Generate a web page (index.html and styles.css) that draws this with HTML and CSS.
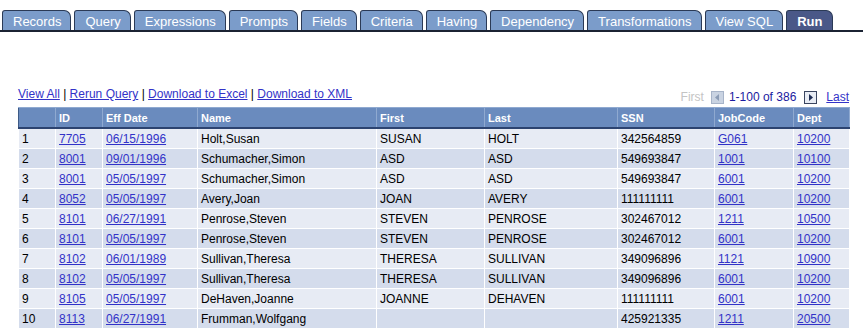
FILE: index.html
```html
<!DOCTYPE html>
<html lang="en">
  <head>
    <meta charset="UTF-8" />
    <title>Query Run</title>
    <link rel="stylesheet" href="styles.css">
  </head>
  <body>
    <div class="tabs">
      <a class="tab">Records</a>
      <a class="tab">Query</a>
      <a class="tab">Expressions</a>
      <a class="tab">Prompts</a>
      <a class="tab">Fields</a>
      <a class="tab">Criteria</a>
      <a class="tab">Having</a>
      <a class="tab">Dependency</a>
      <a class="tab">Transformations</a>
      <a class="tab">View SQL</a>
      <a class="tab tab-active">Run</a>
    </div>

    <div class="results">
      <div class="results_bar">
        <div class="results_links">
          <a href="#">View All</a> | <a href="#">Rerun Query</a> |
          <a href="#">Download to Excel</a> | <a href="#">Download to XML</a>
        </div>
        <div class="results_nav">
          <span class="nav_first">First</span>
          <span class="nav_btn nav_btn-off">
            <svg width="9" height="9" viewBox="0 0 9 9"><path d="M6 1 L2 4.5 L6 8 Z" fill="#8b9cb6"/></svg>
          </span>
          <span class="nav_count">1-100 of 386</span>
          <span class="nav_btn">
            <svg width="9" height="9" viewBox="0 0 9 9"><path d="M3 1 L7 4.5 L3 8 Z" fill="#1e2d55"/></svg>
          </span>
          <a href="#" class="nav_last">Last</a>
        </div>
      </div>

      <table class="grid">
        <colgroup>
          <col style="width: 37px" />
          <col style="width: 47px" />
          <col style="width: 95px" />
          <col style="width: 179px" />
          <col style="width: 108px" />
          <col style="width: 133px" />
          <col style="width: 97px" />
          <col style="width: 79px" />
          <col style="width: 56px" />
        </colgroup>
        <thead>
          <tr>
            <th></th>
            <th>ID</th>
            <th>Eff Date</th>
            <th>Name</th>
            <th>First</th>
            <th>Last</th>
            <th>SSN</th>
            <th>JobCode</th>
            <th>Dept</th>
          </tr>
        </thead>
        <tbody>
          <tr><td>1</td><td><a href="#">7705</a></td><td><a href="#">06/15/1996</a></td><td>Holt,Susan</td><td>SUSAN</td><td>HOLT</td><td>342564859</td><td><a href="#">G061</a></td><td><a href="#">10200</a></td></tr>
          <tr><td>2</td><td><a href="#">8001</a></td><td><a href="#">09/01/1996</a></td><td>Schumacher,Simon</td><td>ASD</td><td>ASD</td><td>549693847</td><td><a href="#">1001</a></td><td><a href="#">10100</a></td></tr>
          <tr><td>3</td><td><a href="#">8001</a></td><td><a href="#">05/05/1997</a></td><td>Schumacher,Simon</td><td>ASD</td><td>ASD</td><td>549693847</td><td><a href="#">6001</a></td><td><a href="#">10200</a></td></tr>
          <tr><td>4</td><td><a href="#">8052</a></td><td><a href="#">05/05/1997</a></td><td>Avery,Joan</td><td>JOAN</td><td>AVERY</td><td>111111111</td><td><a href="#">6001</a></td><td><a href="#">10200</a></td></tr>
          <tr><td>5</td><td><a href="#">8101</a></td><td><a href="#">06/27/1991</a></td><td>Penrose,Steven</td><td>STEVEN</td><td>PENROSE</td><td>302467012</td><td><a href="#">1211</a></td><td><a href="#">10500</a></td></tr>
          <tr><td>6</td><td><a href="#">8101</a></td><td><a href="#">05/05/1997</a></td><td>Penrose,Steven</td><td>STEVEN</td><td>PENROSE</td><td>302467012</td><td><a href="#">6001</a></td><td><a href="#">10200</a></td></tr>
          <tr><td>7</td><td><a href="#">8102</a></td><td><a href="#">06/01/1989</a></td><td>Sullivan,Theresa</td><td>THERESA</td><td>SULLIVAN</td><td>349096896</td><td><a href="#">1121</a></td><td><a href="#">10900</a></td></tr>
          <tr><td>8</td><td><a href="#">8102</a></td><td><a href="#">05/05/1997</a></td><td>Sullivan,Theresa</td><td>THERESA</td><td>SULLIVAN</td><td>349096896</td><td><a href="#">6001</a></td><td><a href="#">10200</a></td></tr>
          <tr><td>9</td><td><a href="#">8105</a></td><td><a href="#">05/05/1997</a></td><td>DeHaven,Joanne</td><td>JOANNE</td><td>DEHAVEN</td><td>111111111</td><td><a href="#">6001</a></td><td><a href="#">10200</a></td></tr>
          <tr><td>10</td><td><a href="#">8113</a></td><td><a href="#">06/27/1991</a></td><td>Frumman,Wolfgang</td><td></td><td></td><td>425921335</td><td><a href="#">1211</a></td><td><a href="#">20500</a></td></tr>
        </tbody>
      </table>
    </div>
  </body>
</html>
```

FILE: styles.css
```css
body {
  margin: 0;
  color: #000;
  font-family: "Liberation Sans", Arial, sans-serif;
  font-size: 12px;
  background-color: #fff;
}

a {
  color: #3232c8;
  text-decoration: underline;
}

/* tab strip */
.tabs {
  display: flex;
  gap: 3px;
  margin-top: 10px;
  padding-left: 2px;
  border-bottom: 2px solid #1b2333;
  height: 20px;
}

.tab {
  display: flex;
  align-items: center;
  height: 20px;
  box-sizing: border-box;
  padding: 1px 9px 0 10px;
  background-color: #7b9cca;
  border: 1px solid #2b3a56;
  border-bottom: none;
  border-radius: 3px 7px 0 0;
  color: #fff;
  font-size: 13px;
  text-decoration: none;
  white-space: nowrap;
}

.tab-active {
  background-color: #4a5888;
  font-weight: bold;
  padding: 1px 10px 0 10px;
}

/* results */
.results {
  margin-left: 18px;
  width: 832px;
}

.results_bar {
  display: flex;
  justify-content: space-between;
  align-items: flex-end;
  margin-top: 55px;
  height: 20px;
}

.results_links {
  font-size: 12px;
  color: #000;
  padding-bottom: 6px;
}

.results_nav {
  display: flex;
  align-items: center;
  gap: 5px;
  font-size: 12px;
  padding-bottom: 3px;
  padding-right: 1px;
}

.nav_first {
  color: #c4c4c4;
  margin-right: 2px;
}

.nav_count {
  color: #1a1aa0;
  margin-right: 3px;
}

.nav_btn {
  display: flex;
  align-items: center;
  justify-content: center;
  width: 13px;
  height: 13px;
  box-sizing: border-box;
  border: 1px solid #3a4560;
  background-color: #e8ecf4;
}

.nav_btn-off {
  border-color: #a7b4c9;
  background-color: #c9d3e2;
}

.nav_last {
  margin-left: 4px;
}

/* grid */
.grid {
  width: 832px;
  table-layout: fixed;
  border-collapse: collapse;
  font-size: 12px;
}

.grid th {
  height: 19px;
  padding: 0 3px;
  text-align: left;
  font-size: 11px;
  font-weight: bold;
  color: #fff;
  background-color: #6a8bbe;
  border-left: 1px solid #3d5a86;
  border-right: 1px solid #8fa9d0;
  border-bottom: 2px solid #2c4370;
  border-top: 1px solid #8fa9d0;
}

.grid td {
  height: 19px;
  padding: 0 3px;
  white-space: nowrap;
  overflow: hidden;
  border: 1px solid #fff;
}

.grid tbody tr:nth-child(odd) td {
  background-color: #e7ebf4;
}

.grid tbody tr:nth-child(even) td {
  background-color: #d4dcec;
}
```
